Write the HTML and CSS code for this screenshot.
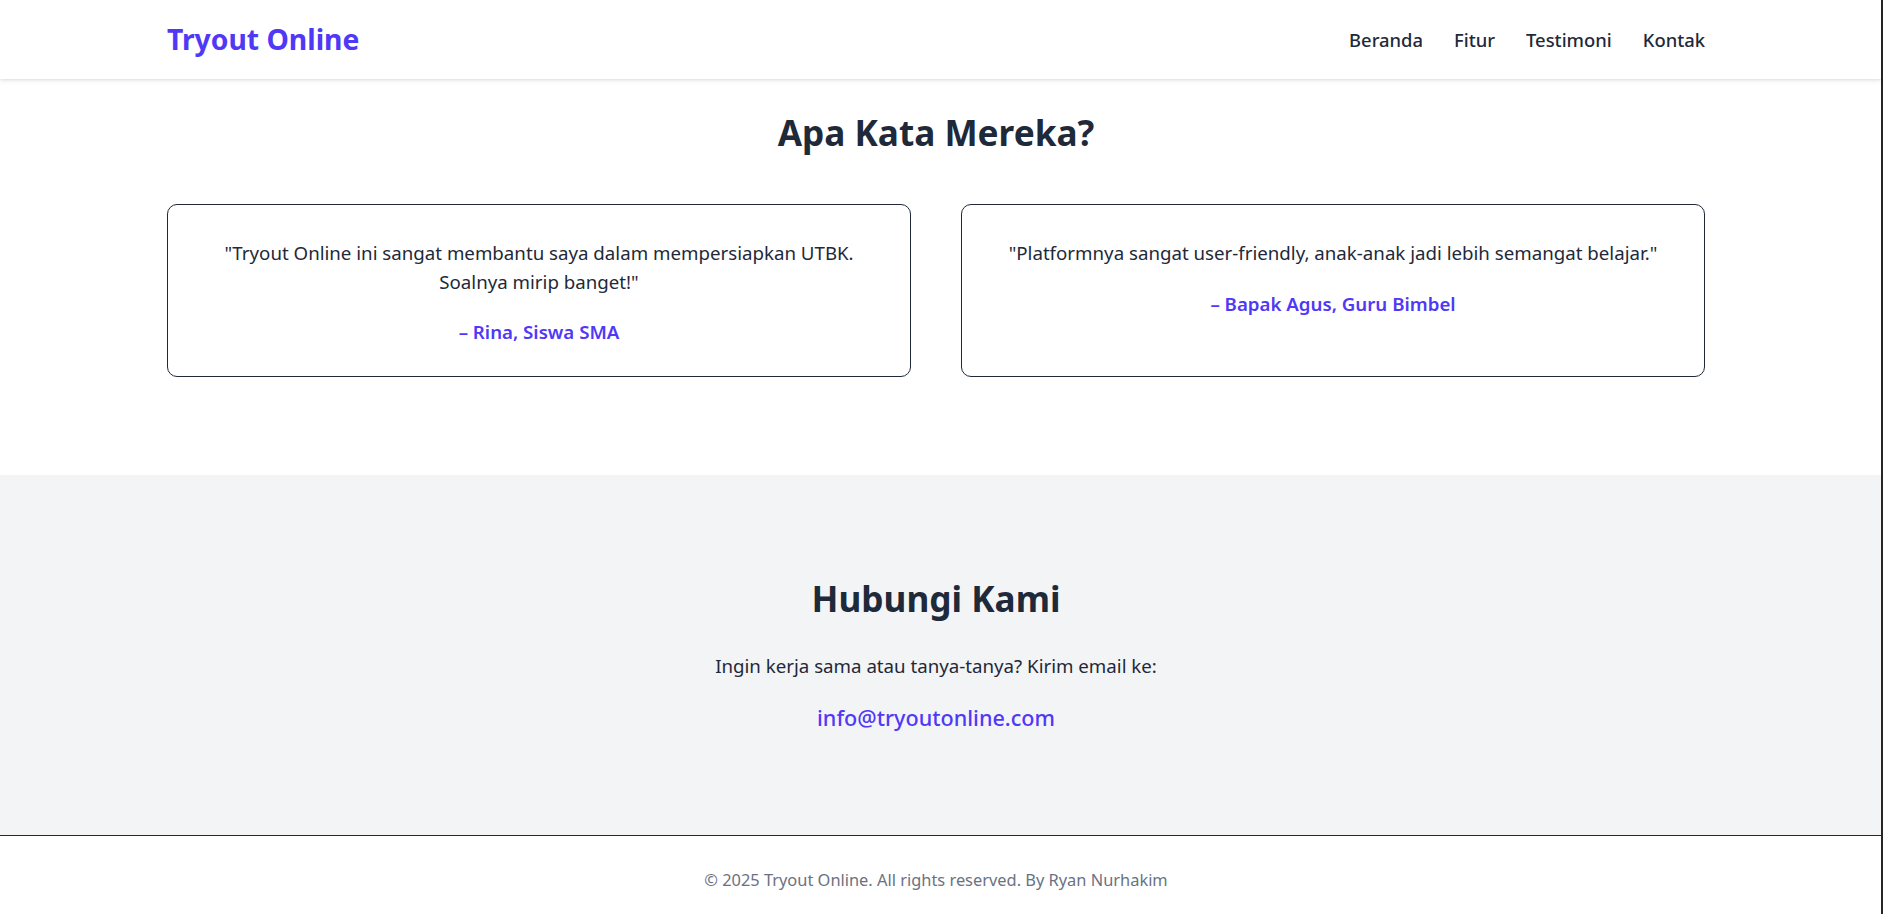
FILE: index.html
```html
<!DOCTYPE html>
<html lang="id">
<head>
<meta charset="utf-8">
<title>Tryout Online</title>
<link rel="stylesheet" href="styles.css">
</head>
<body>
<div class="page">
  <header class="site-header">
    <div class="container header-inner">
      <a class="logo" href="#">Tryout Online</a>
      <nav class="nav">
        <a href="#">Beranda</a>
        <a href="#">Fitur</a>
        <a href="#">Testimoni</a>
        <a href="#">Kontak</a>
      </nav>
    </div>
  </header>

  <section class="testimoni">
    <div class="container">
      <h2 class="section-title">Apa Kata Mereka?</h2>
      <div class="cards">
        <div class="card">
          <p class="quote">"Tryout Online ini sangat membantu saya dalam mempersiapkan UTBK. Soalnya mirip banget!"</p>
          <p class="author">– Rina, Siswa SMA</p>
        </div>
        <div class="card">
          <p class="quote">"Platformnya sangat user-friendly, anak-anak jadi lebih semangat belajar."</p>
          <p class="author">– Bapak Agus, Guru Bimbel</p>
        </div>
      </div>
    </div>
  </section>

  <section class="kontak">
    <div class="container kontak-inner">
      <h2 class="section-title kontak-title">Hubungi Kami</h2>
      <p class="kontak-text">Ingin kerja sama atau tanya-tanya? Kirim email ke:</p>
      <a class="email" href="#">info@tryoutonline.com</a>
    </div>
  </section>

  <footer class="site-footer">
    <p>© 2025 Tryout Online. All rights reserved. By Ryan Nurhakim</p>
  </footer>
</div>
</body>
</html>
```

FILE: styles.css
```css
* {
  box-sizing: border-box;
}

html, body {
  margin: 0;
  padding: 0;
  background: #ffffff;
}

body {
  font-family: "Noto Sans", "Open Sans", sans-serif;
  color: #1e2939;
  overflow: hidden;
}

.page {
  border-right: 2px solid #262626;
  min-height: 914px;
}

a {
  text-decoration: none;
}

.container {
  width: 1538px;
  margin-left: 167px;
}

.site-header {
  height: 79px;
  background: #ffffff;
  box-shadow: 0 2px 5px rgba(0, 0, 0, 0.08), 0 1px 2px rgba(0, 0, 0, 0.06);
  position: relative;
  z-index: 2;
}

.header-inner {
  height: 100%;
  display: flex;
  align-items: center;
  justify-content: space-between;
}

.logo {
  font-size: 28.3px;
  font-weight: 700;
  color: #4f39f6;
  line-height: 1;
}

.nav {
  display: flex;
  gap: 31px;
}

.nav a {
  font-size: 18.4px;
  font-weight: 500;
  color: #1e2939;
}

.testimoni {
  padding-top: 32px;
  padding-bottom: 98px;
}

.section-title {
  margin: 0;
  text-align: center;
  font-size: 35.2px;
  line-height: 43.2px;
  font-weight: 700;
  color: #1e2939;
}

.cards {
  margin-top: 50px;
  display: grid;
  grid-template-columns: 1fr 1fr;
  gap: 50px;
}

.card {
  border: 1px solid #1e2939;
  border-radius: 10px;
  padding: 33.6px 28.8px 29px;
  text-align: center;
}

.quote {
  margin: 0;
  font-size: 18.7px;
  line-height: 28.8px;
}

.author {
  margin: 22px 0 0;
  font-size: 18.7px;
  line-height: 28.8px;
  font-weight: 600;
  color: #4f39f6;
}

.kontak {
  background: #f3f4f6;
  padding-top: 102px;
  padding-bottom: 100px;
  border-bottom: 1px solid #1e2939;
}

.kontak-inner {
  display: flex;
  flex-direction: column;
  align-items: center;
}

.kontak-text {
  margin: 32px 0 0;
  font-size: 18.7px;
  line-height: 28.8px;
}

.email {
  margin-top: 20px;
  font-size: 21.6px;
  line-height: 33.6px;
  font-weight: 500;
  color: #4f39f6;
}

.site-footer {
  padding-top: 32px;
  text-align: center;
  width: 1538px;
  margin-left: 167px;
}

.site-footer p {
  margin: 0;
  font-size: 16.4px;
  line-height: 24px;
  color: #6a7282;
}
```
